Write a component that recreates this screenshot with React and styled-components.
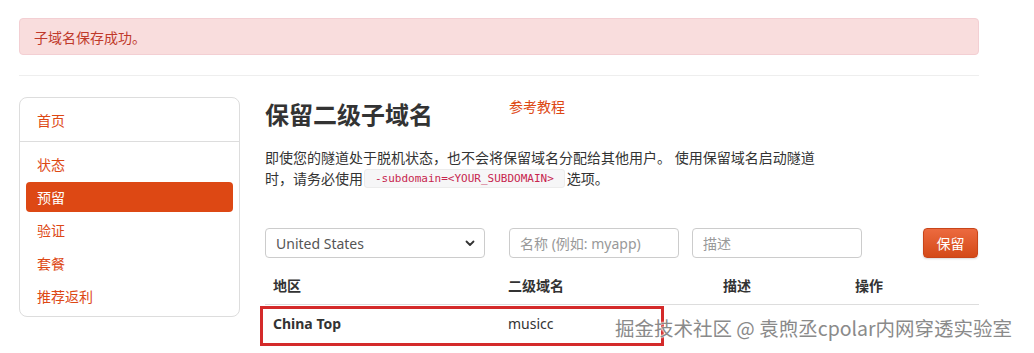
import React from "react";
import styled, { createGlobalStyle } from "styled-components";

const Global = createGlobalStyle`
  html, body { margin: 0; padding: 0; background: #fff; }
  body {
    font-family: "Noto Sans", "Noto Sans CJK SC", sans-serif;
    font-size: 14px;
    color: #333;
  }
  * { box-sizing: border-box; }
`;

const ORANGE = "#dd4814";

const Page = styled.div`
  position: relative;
  width: 1034px;
  height: 353px;
  overflow: hidden;
  padding: 18px 0 0 19px;
`;

const Inner = styled.div`
  width: 960px;
`;

const Alert = styled.div`
  height: 37px;
  display: flex;
  align-items: center;
  padding: 0 14px;
  background: #f9dddd;
  border: 1px solid #f3cfd3;
  border-radius: 4px;
  color: #c0392b;
  font-size: 14px;
`;

const Rule = styled.hr`
  border: 0;
  border-top: 1px solid #eee;
  margin: 20px 0 21px;
`;

const Layout = styled.div`
  display: flex;
  align-items: flex-start;
  gap: 25px;
`;

const Sidebar = styled.nav`
  width: 221px;
  flex: none;
  border: 1px solid #ddd;
  border-radius: 8px;
  background: #fff;
`;

const SideHead = styled.div`
  height: 44px;
  display: flex;
  align-items: center;
  padding-left: 17px;
  border-bottom: 1px solid #ddd;
  color: ${ORANGE};
`;

const SideList = styled.div`
  padding: 7px 6px 5px;
  display: flex;
  flex-direction: column;
  gap: 3px;
`;

const SideItem = styled.div`
  height: 30px;
  display: flex;
  align-items: center;
  padding-left: 11px;
  border-radius: 4px;
  color: ${(p) => (p.$active ? "#fff" : ORANGE)};
  background: ${(p) => (p.$active ? ORANGE : "transparent")};
`;

const Content = styled.main`
  flex: 1;
  min-width: 0;
`;

const TitleRow = styled.div`
  display: flex;
  align-items: flex-start;
`;

const Title = styled.h1`
  margin: 0;
  width: 244px;
  font-size: 24px;
  line-height: 36px;
  font-weight: 700;
  color: #333;
`;

const TutorialLink = styled.a`
  color: ${ORANGE};
  font-size: 14px;
  line-height: 20px;
  text-decoration: none;
`;

const Lead = styled.p`
  margin: 14px 0 0;
  max-width: 558px;
  line-height: 21px;
  color: #333;
`;

const Code = styled.code`
  display: inline-block;
  vertical-align: top;
  margin: 1px 2px 0 1px;
  height: 19px;
  line-height: 17px;
  font-family: "DejaVu Sans Mono", "Liberation Mono", monospace;
  font-size: 11px;
  color: #c7254e;
  background: #f6f6f7;
  border: 1px solid #ececec;
  border-radius: 3px;
  padding: 0 10px;
`;

const FormRow = styled.div`
  margin-top: 39px;
  display: flex;
  align-items: center;
  height: 30px;
`;

const SelectBox = styled.div`
  width: 220px;
  height: 30px;
  margin-right: 24px;
  border: 1px solid #ccc;
  border-radius: 4px;
  padding: 0 9px 0 10px;
  display: flex;
  align-items: center;
  justify-content: space-between;
  color: #555;
  font-size: 14px;
`;

const Input = styled.input`
  width: 170px;
  height: 30px;
  margin-right: ${(p) => p.$gap || 0}px;
  border: 1px solid #ccc;
  border-radius: 4px;
  padding: 0 10px;
  font-family: inherit;
  font-size: 14px;
  color: #555;
  &::placeholder { color: #999; }
`;

const Button = styled.button`
  margin-left: auto;
  margin-right: 1px;
  width: 55px;
  height: 30px;
  border: 1px solid #c8451a;
  border-radius: 4px;
  background: linear-gradient(#ec6a3f, #d44a18);
  color: #fff;
  font-family: inherit;
  font-size: 14px;
  padding: 0;
  box-shadow: 0 1px 2px rgba(0,0,0,0.15);
`;

const TableWrap = styled.div`
  position: relative;
  margin-top: 10px;
`;

const Table = styled.table`
  width: 100%;
  border-collapse: collapse;
  table-layout: fixed;
`;

const Th = styled.th`
  text-align: left;
  font-weight: 700;
  padding: 8px;
  line-height: 20px;
  border-bottom: 1px solid #ddd;
  color: #333;
`;

const Td = styled.td`
  padding: 9px 8px;
  line-height: 20px;
  font-weight: ${(p) => (p.$bold ? 700 : 400)};
  color: #333;
`;

const Highlight = styled.div`
  position: absolute;
  left: -5px;
  top: 38px;
  width: 404px;
  height: 40px;
  border: 3px solid #d42a2a;
  pointer-events: none;
`;

const Watermark = styled.div`
  position: absolute;
  left: 615px;
  top: 316px;
  font-family: "Noto Sans CJK SC", "Noto Sans", sans-serif;
  font-size: 19.5px;
  line-height: 24px;
  color: #8a8a8a;
  white-space: nowrap;
  text-shadow: 0 0 2px #fff, 0 0 2px #fff, 0 0 1px #fff;
  pointer-events: none;
`;

const Chevron = () => (
  <svg width="10" height="7" viewBox="0 0 10 7" fill="none">
    <path d="M1.5 1.5 L5 5 L8.5 1.5" stroke="#333" strokeWidth="1.8" strokeLinecap="round" strokeLinejoin="round" />
  </svg>
);

const navItems = [
  { label: "状态" },
  { label: "预留", active: true },
  { label: "验证" },
  { label: "套餐" },
  { label: "推荐返利" },
];

export default function App() {
  return (
    <>
      <Global />
      <Page>
        <Inner>
          <Alert>子域名保存成功。</Alert>
          <Rule />
          <Layout>
            <Sidebar>
              <SideHead>首页</SideHead>
              <SideList>
                {navItems.map((n) => (
                  <SideItem key={n.label} $active={n.active}>{n.label}</SideItem>
                ))}
              </SideList>
            </Sidebar>
            <Content>
              <TitleRow>
                <Title>保留二级子域名</Title>
                <TutorialLink href="#">参考教程</TutorialLink>
              </TitleRow>
              <Lead>
                即使您的隧道处于脱机状态，也不会将保留域名分配给其他用户。 使用保留域名启动隧道时，请务必使用<Code>-subdomain=&lt;YOUR_SUBDOMAIN&gt;</Code>选项。
              </Lead>
              <FormRow>
                <SelectBox>
                  <span>United States</span>
                  <Chevron />
                </SelectBox>
                <Input $gap={13} placeholder="名称 (例如: myapp)" />
                <Input placeholder="描述" />
                <Button>保留</Button>
              </FormRow>
              <TableWrap>
                <Table>
                  <colgroup>
                    <col style={{ width: 235 }} />
                    <col style={{ width: 215 }} />
                    <col style={{ width: 132 }} />
                    <col />
                  </colgroup>
                  <thead>
                    <tr>
                      <Th>地区</Th>
                      <Th>二级域名</Th>
                      <Th>描述</Th>
                      <Th>操作</Th>
                    </tr>
                  </thead>
                  <tbody>
                    <tr>
                      <Td $bold>China Top</Td>
                      <Td>musicc</Td>
                      <Td></Td>
                      <Td></Td>
                    </tr>
                  </tbody>
                </Table>
                <Highlight />
              </TableWrap>
            </Content>
          </Layout>
        </Inner>
        <Watermark>掘金技术社区 @ 袁煦丞cpolar内网穿透实验室</Watermark>
      </Page>
    </>
  );
}
